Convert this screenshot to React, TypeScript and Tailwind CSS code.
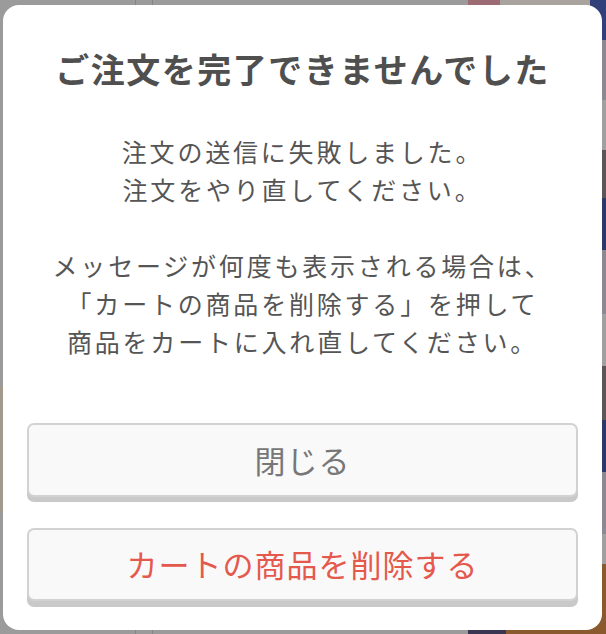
import React from 'react';

const jp = "font-['Noto_Sans_CJK_JP','Noto_Sans',sans-serif]";

// strips of the page that peek out around the dialog
const rightBands = [
  { h: 'h-[60px]', c: 'bg-[#8d8993]' },
  { h: 'h-[50px]', c: 'bg-[#a0a0a0]' },
  { h: 'h-[48px]', c: 'bg-[#5d5557]' },
  { h: 'h-[52px]', c: 'bg-[#2b3a68]' },
  { h: 'h-[64px]', c: 'bg-[#8d8993]' },
  { h: 'h-[52px]', c: 'bg-[#a0a0a0]' },
  { h: 'h-[54px]', c: 'bg-[#5d5557]' },
  { h: 'h-[52px]', c: 'bg-[#2b3a68]' },
  { h: 'h-[62px]', c: 'bg-[#8d8993]' },
  { h: 'h-[30px]', c: 'bg-[#a0a0a0]' },
];

const Backdrop: React.FC = () => (
  <div className="flex h-[634px] w-full bg-[#9b9b9b]">
    <div className="w-[135px] flex flex-col">
      <div className="h-[386px]" />
      <div className="h-[126px] bg-[#a29a8c]" />
    </div>
    <div className="w-[18px] border-x border-[#858585]" />
    <div className="flex-1" />
    <div className="w-[138px] flex flex-col">
      <div className="flex h-[40px]">
        <div className="w-[32px] bg-[#9c6b73]" />
        <div className="flex-1 bg-[#a9a39d]" />
        <div className="w-[16px] bg-[#31407a]" />
      </div>
      {rightBands.map((b, i) => (
        <div key={i} className={`${b.h} ${b.c}`} />
      ))}
      <div className="flex flex-1">
        <div className="w-[38px] bg-[#3a3550]" />
        <div className="flex-1 bg-[#8a5a2e]" />
      </div>
    </div>
  </div>
);

export default function App() {
  return (
    <div className={`relative h-[634px] w-[606px] overflow-hidden ${jp}`}>
      <Backdrop />

      {/* Dialog */}
      <div className="absolute inset-0 pt-[5px] pl-[3px]">
        <div className="w-[599px] h-[625px] bg-white rounded-[16px] flex flex-col px-[24px] pt-[44px]">
          <h2 className="text-center text-[34px] leading-[40px] font-bold tracking-[1.5px] text-[#4f4f4f]">
            ご注文を完了できませんでした
          </h2>

          <p className="mt-[43px] text-center text-[25px] leading-[38px] tracking-[2.8px] text-[#555555]">
            注文の送信に失敗しました。
            <br />
            注文をやり直してください。
            <br />
            <br />
            メッセージが何度も表示される場合は、
            <br />
            「カートの商品を削除する」を押して
            <br />
            商品をカートに入れ直してください。
          </p>

          <button className="mt-[63px] h-[74px] w-full rounded-[7px] border-2 border-[#d2d2d2] bg-[#f9f9f9] shadow-[0_5px_0_#c9c9c9] text-[31px] text-[#777777] tracking-[1px]">
            閉じる
          </button>

          <button className="mt-[31px] h-[73px] w-full rounded-[7px] border-2 border-[#d2d2d2] bg-[#f9f9f9] shadow-[0_6px_0_#c9c9c9] text-[31px] text-[#e5584c] tracking-[1px]">
            カートの商品を削除する
          </button>
        </div>
      </div>
    </div>
  );
}
